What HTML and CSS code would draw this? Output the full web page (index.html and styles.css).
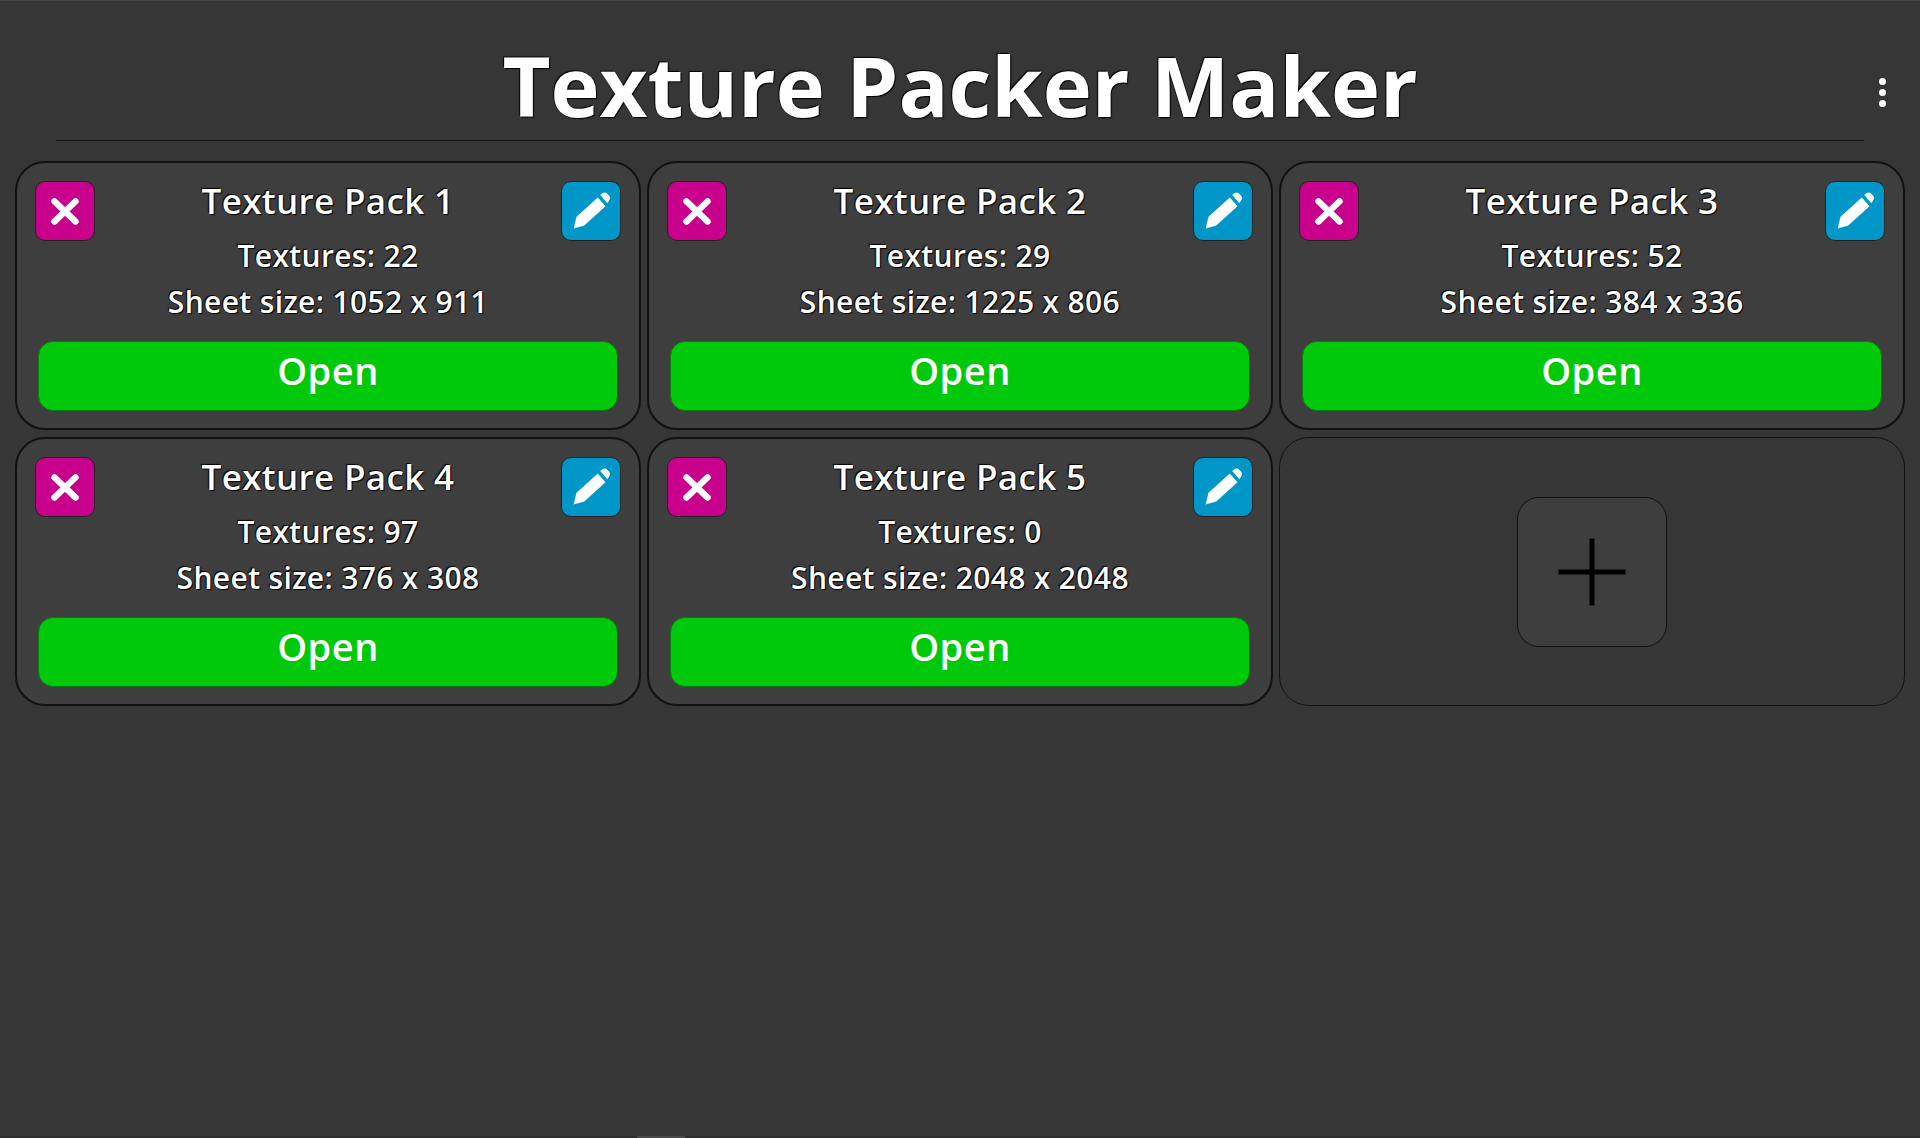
FILE: index.html
```html
<!DOCTYPE html>
<html>

<head>
    <title>Texture Packer Maker</title>
    <link rel="stylesheet" href="styles.css">
</head>

<body>
    <header class="top">
        <h1 class="title">Texture Packer Maker</h1>
        <button class="menu">
            <span class="dot"></span>
            <span class="dot"></span>
            <span class="dot"></span>
        </button>
    </header>

    <main class="packs">

        <!-- pack 1 -->
        <section class="card">
            <div class="card-head">
                <button class="square del">
                    <svg viewBox="0 0 60 60"><path class="cross" d="M19 20 L41 41 M41 20 L19 41" /></svg>
                </button>
                <h2 class="name">Texture Pack 1</h2>
                <button class="square edit">
                    <svg viewBox="0 0 60 60"><path class="pencil" d="M12 48 L15 36 L37 16 L45 25 L23 45 Z M39.5 13.5 L42 11.5 Q44 10 46 11.5 L49 14.5 Q50.500 16.500 49 18.500 L47 22 Z" /></svg>
                </button>
            </div>
            <p class="info">Textures: 22</p>
            <p class="info">Sheet size: 1052 x 911</p>
            <button class="open">Open</button>
        </section>

        <!-- pack 2 -->
        <section class="card">
            <div class="card-head">
                <button class="square del">
                    <svg viewBox="0 0 60 60"><path class="cross" d="M19 20 L41 41 M41 20 L19 41" /></svg>
                </button>
                <h2 class="name">Texture Pack 2</h2>
                <button class="square edit">
                    <svg viewBox="0 0 60 60"><path class="pencil" d="M12 48 L15 36 L37 16 L45 25 L23 45 Z M39.5 13.5 L42 11.5 Q44 10 46 11.5 L49 14.5 Q50.500 16.500 49 18.500 L47 22 Z" /></svg>
                </button>
            </div>
            <p class="info">Textures: 29</p>
            <p class="info">Sheet size: 1225 x 806</p>
            <button class="open">Open</button>
        </section>

        <!-- pack 3 -->
        <section class="card">
            <div class="card-head">
                <button class="square del">
                    <svg viewBox="0 0 60 60"><path class="cross" d="M19 20 L41 41 M41 20 L19 41" /></svg>
                </button>
                <h2 class="name">Texture Pack 3</h2>
                <button class="square edit">
                    <svg viewBox="0 0 60 60"><path class="pencil" d="M12 48 L15 36 L37 16 L45 25 L23 45 Z M39.5 13.5 L42 11.5 Q44 10 46 11.5 L49 14.5 Q50.500 16.500 49 18.500 L47 22 Z" /></svg>
                </button>
            </div>
            <p class="info">Textures: 52</p>
            <p class="info">Sheet size: 384 x 336</p>
            <button class="open">Open</button>
        </section>

        <!-- pack 4 -->
        <section class="card">
            <div class="card-head">
                <button class="square del">
                    <svg viewBox="0 0 60 60"><path class="cross" d="M19 20 L41 41 M41 20 L19 41" /></svg>
                </button>
                <h2 class="name">Texture Pack 4</h2>
                <button class="square edit">
                    <svg viewBox="0 0 60 60"><path class="pencil" d="M12 48 L15 36 L37 16 L45 25 L23 45 Z M39.5 13.5 L42 11.5 Q44 10 46 11.5 L49 14.5 Q50.500 16.500 49 18.500 L47 22 Z" /></svg>
                </button>
            </div>
            <p class="info">Textures: 97</p>
            <p class="info">Sheet size: 376 x 308</p>
            <button class="open">Open</button>
        </section>

        <!-- pack 5 -->
        <section class="card">
            <div class="card-head">
                <button class="square del">
                    <svg viewBox="0 0 60 60"><path class="cross" d="M19 20 L41 41 M41 20 L19 41" /></svg>
                </button>
                <h2 class="name">Texture Pack 5</h2>
                <button class="square edit">
                    <svg viewBox="0 0 60 60"><path class="pencil" d="M12 48 L15 36 L37 16 L45 25 L23 45 Z M39.5 13.5 L42 11.5 Q44 10 46 11.5 L49 14.5 Q50.500 16.500 49 18.500 L47 22 Z" /></svg>
                </button>
            </div>
            <p class="info">Textures: 0</p>
            <p class="info">Sheet size: 2048 x 2048</p>
            <button class="open">Open</button>
        </section>

        <!-- add new -->
        <section class="card card-add">
            <button class="add">
                <svg viewBox="0 0 150 150"><path class="plus" d="M41 75 L109 75 M75 41 L75 109" /></svg>
            </button>
        </section>

    </main>
</body>

</html>
```

FILE: styles.css
```css
* {
    box-sizing: border-box;
}

html,
body {
    height: 100%;
}

body {
    margin: 0;
    background: #363636;
    border-top: 1px solid #454545;
    font-family: "Open Sans", "Noto Sans", sans-serif;
    font-weight: 600;
    color: #fff;
    overflow: hidden;
}

/* little handle on the bottom edge */
body::after {
    content: "";
    position: fixed;
    left: 0;
    right: 0;
    bottom: 0;
    height: 2px;
    background: linear-gradient(90deg, #2e2e2e 637px, #4a4a4a 637px, #4a4a4a 685px, #2e2e2e 685px);
}

button {
    padding: 0;
    border: 0;
    font: inherit;
    color: inherit;
}

svg {
    display: block;
    width: 100%;
    height: 100%;
}

.top {
    display: flex;
    align-items: center;
    justify-content: center;
    height: 140px;
    margin: 0 56px;
    padding-top: 27px;
    border-bottom: 1px solid #111;
    position: relative;
}

.title {
    margin: 0;
    font-size: 83px;
    font-weight: 700;
    line-height: 1;
    text-shadow: 1px 1px 1px #000, -1px -1px 1px #000;
}

.menu {
    position: absolute;
    top: 77px;
    right: -22px;
    display: flex;
    flex-direction: column;
    gap: 4px;
    background: none;
}

.dot {
    width: 7px;
    height: 7px;
    border-radius: 50%;
    background: #fff;
}

.packs {
    display: grid;
    grid-template-columns: repeat(3, 626px);
    grid-auto-rows: 269px;
    column-gap: 6px;
    row-gap: 7px;
    padding: 20px 15px 0;
}

.card {
    display: flex;
    flex-direction: column;
    align-items: center;
    padding: 18px 18px 17px;
    background: #3e3e3e;
    border: 2px solid #111;
    border-radius: 30px;
    text-shadow: 1px 1px 1px #000, -1px -1px 1px #000;
}

.card-head {
    display: grid;
    grid-template-columns: 60px 1fr 60px;
    width: 100%;
    height: 60px;
}

.name {
    margin: 0;
    text-align: center;
    font-size: 35px;
    font-weight: 600;
    line-height: 40px;
    letter-spacing: 0.35px;
}

.square {
    width: 60px;
    height: 60px;
    border: 1px solid #222;
    border-radius: 10px;
}

.del {
    background: #c8008c;
}

.edit {
    background: #0096c8;
}

.cross {
    fill: none;
    stroke: #fff;
    stroke-width: 6.5;
    stroke-linecap: round;
}

.pencil {
    fill: #fff;
}

.info {
    margin: 0;
    font-size: 30px;
    line-height: 46px;
    letter-spacing: 0.35px;
}

.info:first-of-type {
    margin-top: -8px;
}

.open {
    width: 580px;
    height: 70px;
    margin-top: 16px;
    background: #00c80a;
    border: 1px solid #0a7a10;
    border-radius: 15px;
    font-size: 38px;
    line-height: 56px;
    letter-spacing: 0.5px;
    padding-bottom: 12px;
}

.card-add {
    justify-content: center;
    background: #363636;
    border-width: 1px;
}

.add {
    width: 150px;
    height: 150px;
    background: #3e3e3e;
    border: 1px solid #111;
    border-radius: 22px;
}

.plus {
    fill: none;
    stroke: #000;
    stroke-width: 5;
}
```
